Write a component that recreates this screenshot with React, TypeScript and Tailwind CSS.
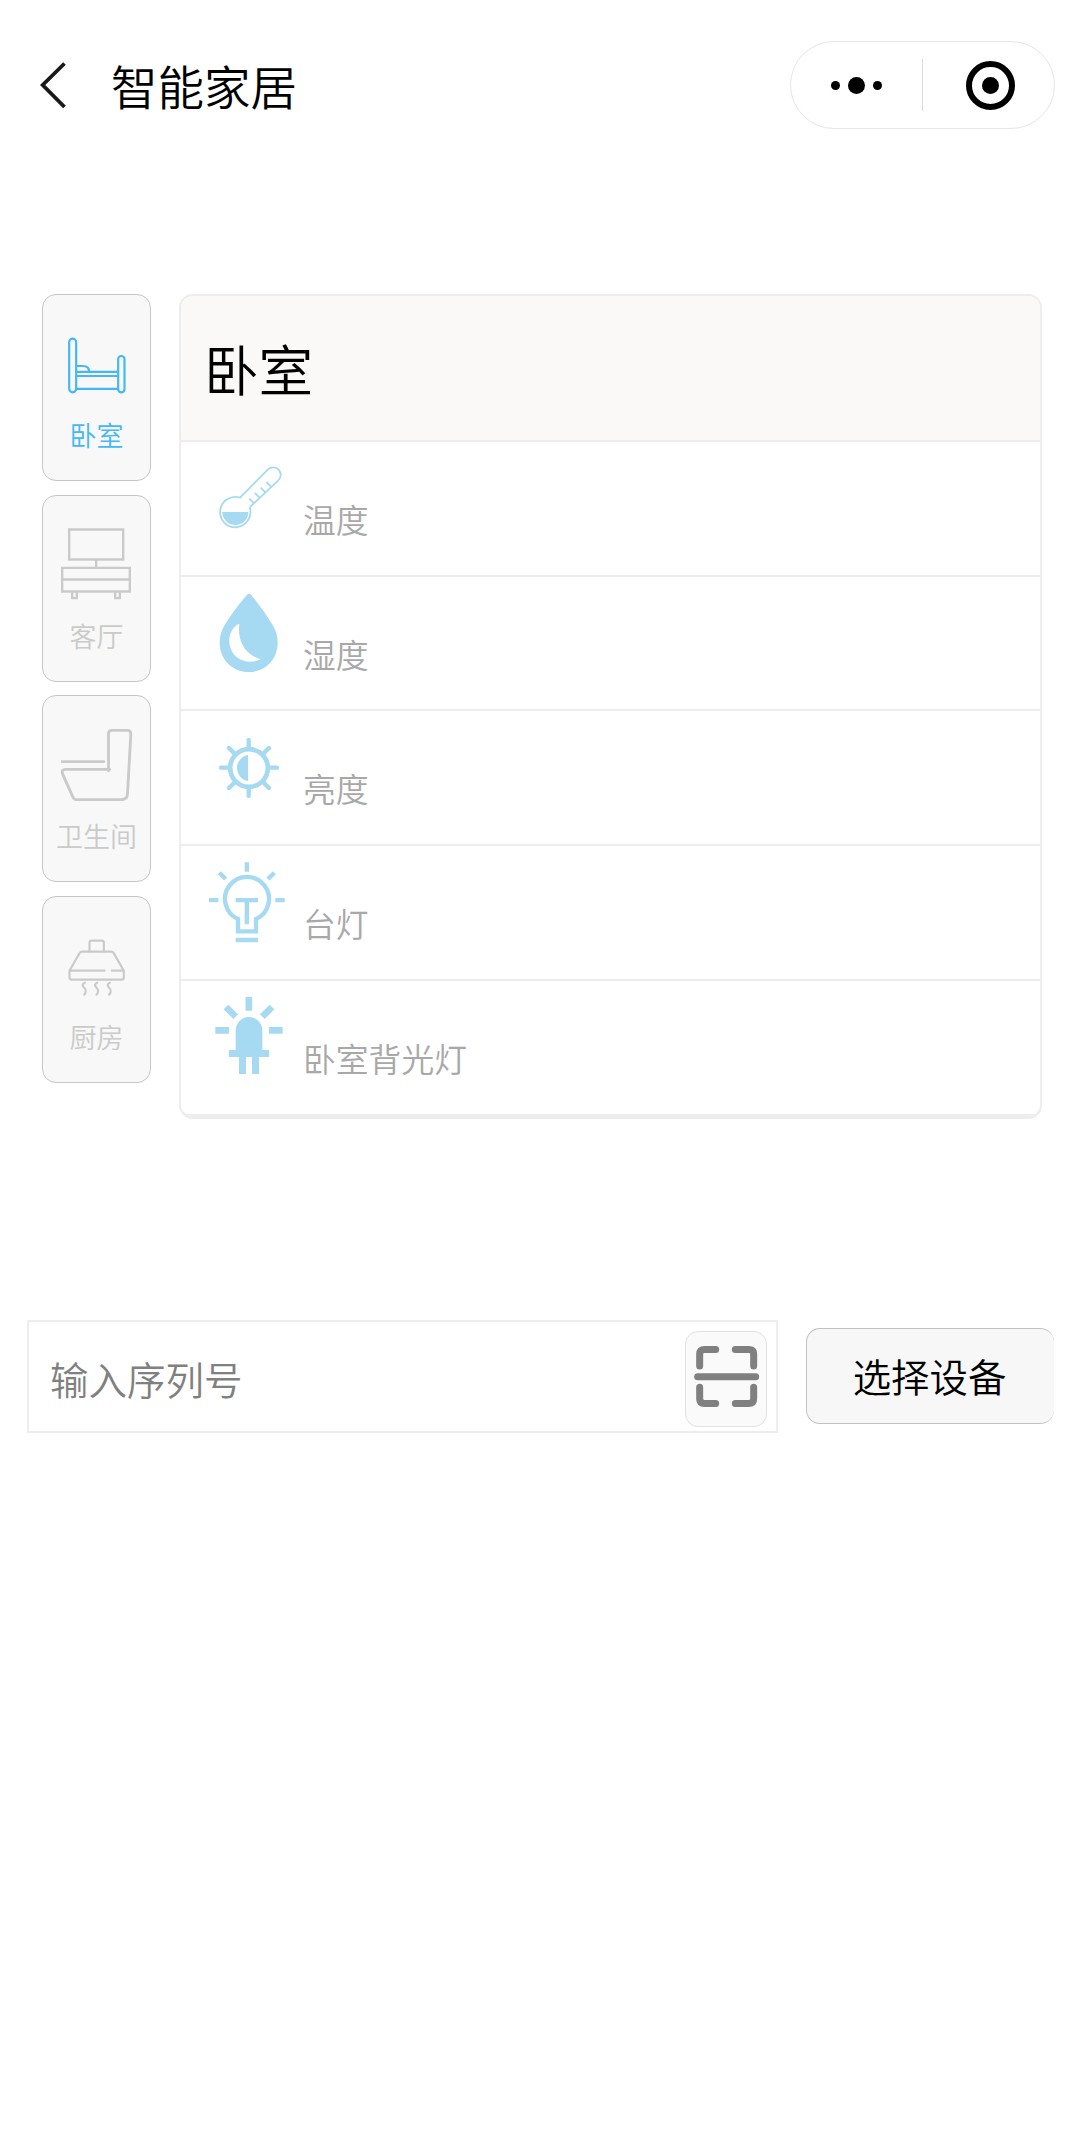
import type { ReactNode } from "react";

type IconProps = { children: ReactNode; viewBox: string; className: string };

function Icon({ children, viewBox, className }: IconProps) {
  return (
    <svg viewBox={viewBox} className={className} fill="none" stroke="currentColor" aria-hidden="true">
      {children}
    </svg>
  );
}

const BedIcon = () => (
  <Icon viewBox="80.5 120 240 240" className="size-20 shrink-0">
    <g strokeWidth="6.5">
      <rect x="117" y="176" width="21" height="161" rx="10.5" />
      <rect x="264" y="228" width="19" height="109" rx="9.5" />
      <path d="M138 258H158Q176 258 177 274M138 275.500H264M138 288H264M138 326.500H264" />
    </g>
  </Icon>
);

const TvIcon = () => (
  <Icon viewBox="80.5 109.5 240 240" className="size-20 shrink-0">
    <g strokeWidth="7">
      <path d="M117 135H279V225H117ZM198 226V249M96 250H299V321H96ZM96 285H299M126 321V341H140V321M255 321V341H269V321" />
    </g>
  </Icon>
);

const ToiletIcon = () => (
  <Icon viewBox="80.5 108 240 240" className="size-20 shrink-0">
    <path
      d="M96 230H221M235 257V146Q235 136 245 136H292Q302 136 302 147L292 326Q291 344 274 344H139Q132 344 129 338L97 266Q93 253 106 253H239"
      strokeWidth="8.500"
      strokeLinecap="round"
    />
  </Icon>
);

const HoodIcon = () => (
  <Icon viewBox="80.5 112 240 240" className="size-20 shrink-0">
    <g strokeWidth="6.500" strokeLinejoin="round" strokeLinecap="round">
      <path d="M178 200V174Q178 168 184 168H215Q221 168 221 174V200" />
      <path d="M118 258L148 206Q151 201 156 201H243Q248 201 251 206L281 258V278Q281 285 274 285H125Q118 285 118 278ZM118 258H223M245 258H281" />
      <path d="M164 294C156 297 156 304 162 309C168 315 168 324 162 330M201 294C193 297 193 304 199 309C205 315 205 324 199 330M239 294C231 297 231 304 237 309C243 315 243 324 237 330" />
    </g>
  </Icon>
);

const ThermometerIcon = () => (
  <Icon viewBox="36 486 270 288" className="h-24 w-[90px] shrink-0 overflow-visible">
    <path d="M239 682L325 601A22 22 0 0 0 294 568L210 653A45.500 45.500 0 1 0 239 682" strokeWidth="5.500" />
    <path d="M238 656L252 670M255 639L269 653M272 623L286 637M289 606L303 620" strokeWidth="5.500" />
    <path d="M157 696H235A39 39 0 0 1 157 696Z" fill="currentColor" stroke="none" />
  </Icon>
);

const DropIcon = () => (
  <Icon viewBox="36 21 270 288" className="h-24 w-[90px] shrink-0 overflow-visible">
    <path
      d="M231 74Q237 68 243 74Q277 115 308 165Q323 190 323 218C323 267 287 306 236 306C186 306 149 267 149 218Q149 190 164 165Q190 122 231 74ZM208 161C164 181 171 250 210 268Q239 283 272 268C227 255 201 214 208 161Z"
      fill="currentColor"
      fillRule="evenodd"
      stroke="none"
    />
  </Icon>
);

const BrightnessIcon = () => (
  <Icon viewBox="36 423 270 288" className="h-24 w-[90px] shrink-0 overflow-visible">
    <circle cx="237" cy="594" r="56.500" strokeWidth="14" />
    <path d="M234 555A39.500 39.500 0 0 0 234 633Z" fill="currentColor" stroke="none" />
    <path
      d="M236 510V533M236 655V678M153 593H175M299 593H321M177 534L192 549M297 534L282 549M177 654L192 639M297 654L282 639"
      strokeWidth="13"
      strokeLinecap="round"
    />
  </Icon>
);

const LampIcon = () => (
  <Icon viewBox="36 47 270 288" className="h-24 w-[90px] shrink-0 overflow-visible">
    <g strokeWidth="13">
      <path d="M204 303H258V266A66 66 0 1 0 204 266ZM197 329H264M197 209.500H264M230.500 209V282" />
      <path d="M230.500 96V124M117 209.500H145M316 209.500H344M148 127L167 146M313 127L294 146" />
    </g>
  </Icon>
);

const LedIcon = () => (
  <Icon viewBox="36 453 270 288" className="h-24 w-[90px] shrink-0 overflow-visible">
    <path
      d="M197 660V601A40 40 0 0 1 277 601V660H297V681H267V732H246V681H228V732H207V681H177V660Z"
      fill="currentColor"
      stroke="none"
    />
    <path d="M236.500 501V542M136 601H177M297 601H338M168 531L197 560M306 531L277 560" strokeWidth="20" />
  </Icon>
);

const rooms = [
  { name: "卧室", icon: <BedIcon />, tone: "mt-0 text-[#45b7f7]" },
  { name: "客厅", icon: <TvIcon />, tone: "mt-3.5 text-[#cacaca]" },
  { name: "卫生间", icon: <ToiletIcon />, tone: "mt-[13px] text-[#cacaca]" },
  { name: "厨房", icon: <HoodIcon />, tone: "mt-3.5 text-[#cacaca]" },
];

const devices = [
  { name: "温度", icon: <ThermometerIcon />, height: "h-[135px]" },
  { name: "湿度", icon: <DropIcon />, height: "h-[134px]" },
  { name: "亮度", icon: <BrightnessIcon />, height: "h-[135px]" },
  { name: "台灯", icon: <LampIcon />, height: "h-[135px]" },
  { name: "卧室背光灯", icon: <LedIcon />, height: "h-[137px]" },
];

export default function App() {
  return (
    <div className="flex min-h-[2156px] w-[1079px] flex-col bg-white font-['Noto_Sans_CJK_SC','Noto_Sans',sans-serif] font-[350] text-black">
      <header className="flex h-[170px] items-start pt-[41px] pr-6 pl-[38px]">
        <button aria-label="返回" className="mt-[17px] w-8 text-[#191919]">
          <Icon viewBox="38 58 32 54" className="h-[54px] w-8">
            <path d="M64.500 63.500L42.700 85L64.500 107" strokeWidth="3.800" />
          </Icon>
        </button>
        <h1 className="mt-0.5 ml-[41px] text-[46.500px] leading-[84px]">智能家居</h1>
        <div className="ml-auto flex h-22 w-[265px] items-center rounded-full border border-[#e6e6e6]">
          <button aria-label="更多" className="flex w-[131px] items-center justify-center gap-2">
            <i className="size-[9px] rounded-full bg-black" />
            <i className="size-[17px] rounded-full bg-black" />
            <i className="size-[9px] rounded-full bg-black" />
          </button>
          <span className="h-[52px] w-px bg-[#dcdcdc]" />
          <button aria-label="关闭" className="ml-[43px] flex size-[49px] items-center justify-center rounded-full border-[6px] border-black">
            <i className="size-[17px] rounded-full bg-black" />
          </button>
        </div>
      </header>

      <main className="flex flex-col pt-[124px]">
        <div className="flex items-start pl-[42px]">
          <nav className="flex w-[109px] flex-col">
            {rooms.map((room) => (
              <button
                key={room.name}
                className={`flex h-[187px] flex-col items-center rounded-[14px] border border-[#c6c6c6] bg-[#f8f8f8] pt-[25px] ${room.tone}`}
              >
                {room.icon}
                <span className="mt-[15px] text-[27px] leading-10 whitespace-nowrap">{room.name}</span>
              </button>
            ))}
          </nav>

          <section className="ml-7 w-[863px] overflow-hidden rounded-[14px] border-2 border-b-[3px] border-[#ededed]">
            <h2 className="h-36 bg-[#faf9f7] pt-[33px] pl-[23px] text-[54.500px] leading-[78px]">卧室</h2>
            <ul>
              {devices.map((device) => (
                <li key={device.name} className={`flex border-t-2 border-[#ededed] last:border-b-2 ${device.height}`}>
                  <span className="ml-px text-[#a6d9f2]">{device.icon}</span>
                  <span className="mt-[53px] ml-[31px] text-[32.800px] leading-12 text-[#a8a8a8]">{device.name}</span>
                </li>
              ))}
            </ul>
          </section>
        </div>

        <form className="mt-[201px] flex items-start pl-[27px]" onSubmit={(event) => event.preventDefault()}>
          <div className="flex h-[113px] w-[751px] items-start border-[2.500px] border-[#ededed] pt-[9px] pl-[21px]">
            <input
              type="text"
              placeholder="输入序列号"
              className="mt-[19px] h-14 w-[500px] text-[38.500px] leading-14 outline-none placeholder:text-[#808080]"
            />
            <button
              type="button"
              aria-label="扫码"
              className="mr-[9px] ml-auto flex h-24 w-[82px] shrink-0 justify-center rounded-[13px] border border-[#e2e2e2] bg-[#fafafa] pt-3 text-[#808080]"
            >
              <Icon viewBox="66 132 204 195" className="h-[65px] w-[68px]">
                <path
                  d="M89 198V163Q89 148.500 104 148.500H137M196 148.500H236Q251 148.500 251 163V198M89 262V296Q89 310.500 104 310.500H137M196 310.500H236Q251 310.500 251 296V262M83 230H257"
                  strokeWidth="21"
                  strokeLinecap="round"
                />
              </Icon>
            </button>
          </div>
          <button
            type="button"
            className="mt-2 ml-7 h-24 w-[248px] rounded-[14px] border border-r-0 border-[#c2c2c2] bg-[#f7f7f7] pr-0.5 text-[38.400px]"
          >
            选择设备
          </button>
        </form>
      </main>
    </div>
  );
}
